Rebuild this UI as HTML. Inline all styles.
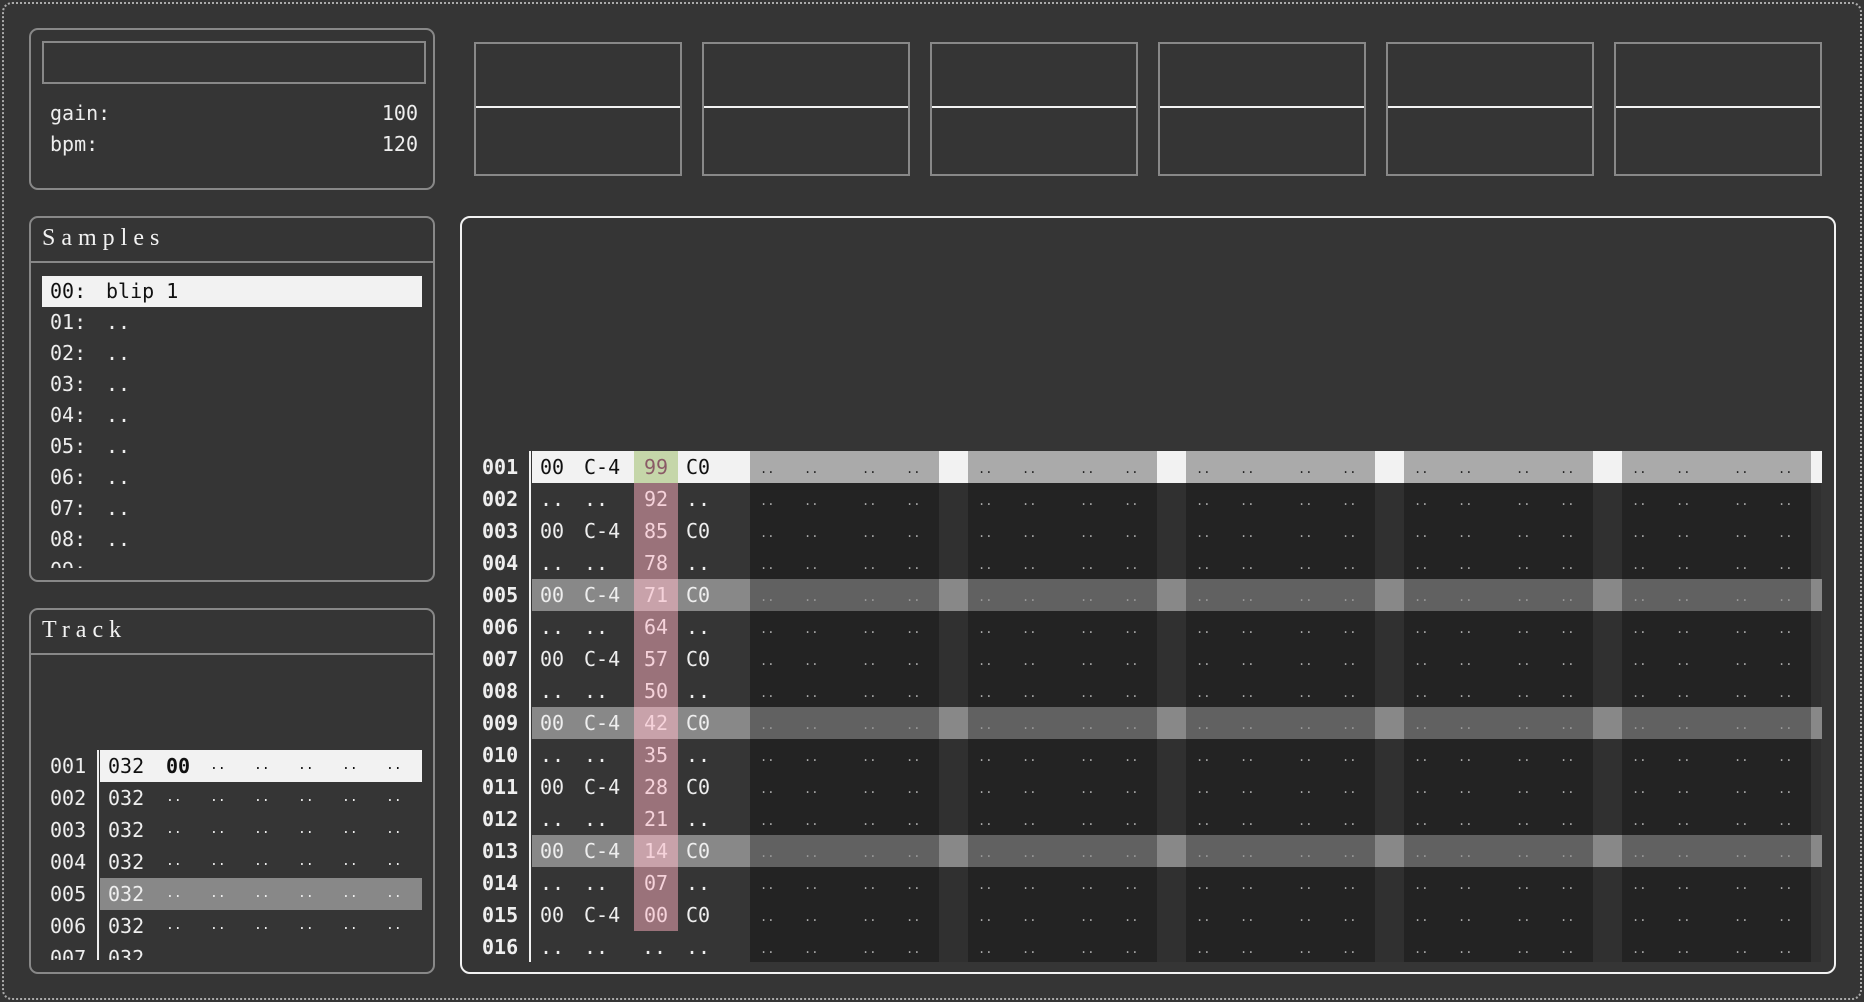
<!DOCTYPE html>
<html><head><meta charset="utf-8"><style>
*{margin:0;padding:0;box-sizing:border-box}
body{width:1864px;height:1002px;background:#353535;position:relative;overflow:hidden;font-family:"DejaVu Sans Mono","Liberation Mono",monospace;color:#eee;font-size:20px}
.a{position:absolute}
.outer{left:2px;top:2px;width:1860px;height:998px;border:2px dotted #aaa;border-radius:10px}
.panel{border:2px solid #888;border-radius:9px}
.hdr{font-family:"Liberation Serif",serif;font-size:24px;letter-spacing:6px;color:#f2f2f2}
.box{border:2px solid #888}
.box::after{content:"";position:absolute;left:0;right:0;top:62px;height:2px;background:#f2f2f2}
.sl{left:42px;width:380px;height:31px;line-height:31px}
.sl b{font-weight:normal;position:absolute;left:8px}
.sl u{text-decoration:none;position:absolute;left:64px}
.tr{left:42px;width:380px;height:32px;line-height:32px}
.tr span{position:absolute}
.pr{left:470px;width:1360px;height:32px;line-height:32px}
.pr span{position:absolute}
.pr .n{left:12px;font-weight:bold;color:#eee}
.pr .c{left:114px}
.pr .v{left:164px;width:44px;text-align:center;color:#f5d2da;background:#9a727a}
.sec{position:absolute;top:0;height:32px;width:189px;font-size:12px;color:#aaa}
.sec i{font-style:normal;position:absolute;top:2px}
.sec i:nth-child(1){left:10px}.sec i:nth-child(2){left:54px}.sec i:nth-child(3){left:112px}.sec i:nth-child(4){left:156px}
.s1{left:280px}.s2{left:498px}.s3{left:716px}.s4{left:934px}.s5{left:1152px}
.rb{position:absolute;left:62px;width:1290px;height:32px}
.sel .rb{background:#f2f2f2}.sel .sec{background:#aaa;color:#222}
.sel span{color:#111}.pr.sel .n{color:#eee}
.sel .v{background:#c5d6a9;color:#8a5a66}
.hl .rb{background:#888}.hl .sec{background:#616161;color:#999}
.hl .v{background:#c8a2aa}
</style></head><body>
<div class="a outer"></div>

<div class="a panel" style="left:29px;top:28px;width:406px;height:162px"></div>
<div class="a" style="left:42px;top:41px;width:384px;height:43px;border:2px solid #888"></div>
<div class="a" style="left:50px;top:100px;line-height:26px">gain:</div>
<div class="a" style="left:358px;top:100px;width:60px;text-align:right;line-height:26px">100</div>
<div class="a" style="left:50px;top:131px;line-height:26px">bpm:</div>
<div class="a" style="left:358px;top:131px;width:60px;text-align:right;line-height:26px">120</div>

<div class="a box" style="left:474px;top:42px;width:208px;height:134px"></div>
<div class="a box" style="left:702px;top:42px;width:208px;height:134px"></div>
<div class="a box" style="left:930px;top:42px;width:208px;height:134px"></div>
<div class="a box" style="left:1158px;top:42px;width:208px;height:134px"></div>
<div class="a box" style="left:1386px;top:42px;width:208px;height:134px"></div>
<div class="a box" style="left:1614px;top:42px;width:208px;height:134px"></div>

<div class="a panel" style="left:29px;top:216px;width:406px;height:366px"></div>
<div class="a" style="left:31px;top:261px;width:402px;height:2px;background:#888"></div>
<div class="a hdr" style="left:42px;top:225px">Samples</div>
<div class="a" style="left:0;top:276px;width:460px;height:292px;overflow:hidden">
<div class="a sl" style="top:0;background:#f2f2f2;color:#111"><b>00:</b><u>blip 1</u></div>
<div class="a sl" style="top:31px"><b>01:</b><u>..</u></div>
<div class="a sl" style="top:62px"><b>02:</b><u>..</u></div>
<div class="a sl" style="top:93px"><b>03:</b><u>..</u></div>
<div class="a sl" style="top:124px"><b>04:</b><u>..</u></div>
<div class="a sl" style="top:155px"><b>05:</b><u>..</u></div>
<div class="a sl" style="top:186px"><b>06:</b><u>..</u></div>
<div class="a sl" style="top:217px"><b>07:</b><u>..</u></div>
<div class="a sl" style="top:248px"><b>08:</b><u>..</u></div>
<div class="a sl" style="top:279px"><b>09:</b><u>..</u></div>
</div>

<div class="a panel" style="left:29px;top:608px;width:406px;height:366px"></div>
<div class="a" style="left:31px;top:653px;width:402px;height:2px;background:#888"></div>
<div class="a hdr" style="left:42px;top:617px">Track</div>
<div class="a" style="left:0;top:750px;width:460px;height:210px;overflow:hidden">
<div class="a" style="left:97px;top:0;width:2px;height:210px;background:#eee"></div>
<div class="a tr" style="top:0"><span style="left:8px;color:#eee">001</span><span style="left:58px;width:322px;height:32px;background:#f2f2f2"></span><span style="left:66px;color:#111">032</span><span style="left:124px;color:#111;font-weight:bold">00</span><span style="left:168px;color:#111;font-size:13px">..</span><span style="left:212px;color:#111;font-size:13px">..</span><span style="left:256px;color:#111;font-size:13px">..</span><span style="left:300px;color:#111;font-size:13px">..</span><span style="left:344px;color:#111;font-size:13px">..</span></div>
<div class="a tr" style="top:32px"><span style="left:8px">002</span><span style="left:66px">032</span><span style="left:124px;font-size:13px">..</span><span style="left:168px;font-size:13px">..</span><span style="left:212px;font-size:13px">..</span><span style="left:256px;font-size:13px">..</span><span style="left:300px;font-size:13px">..</span><span style="left:344px;font-size:13px">..</span></div>
<div class="a tr" style="top:64px"><span style="left:8px">003</span><span style="left:66px">032</span><span style="left:124px;font-size:13px">..</span><span style="left:168px;font-size:13px">..</span><span style="left:212px;font-size:13px">..</span><span style="left:256px;font-size:13px">..</span><span style="left:300px;font-size:13px">..</span><span style="left:344px;font-size:13px">..</span></div>
<div class="a tr" style="top:96px"><span style="left:8px">004</span><span style="left:66px">032</span><span style="left:124px;font-size:13px">..</span><span style="left:168px;font-size:13px">..</span><span style="left:212px;font-size:13px">..</span><span style="left:256px;font-size:13px">..</span><span style="left:300px;font-size:13px">..</span><span style="left:344px;font-size:13px">..</span></div>
<div class="a tr" style="top:128px"><span style="left:8px">005</span><span style="left:58px;width:322px;height:32px;background:#888"></span><span style="left:66px">032</span><span style="left:124px;font-size:13px">..</span><span style="left:168px;font-size:13px">..</span><span style="left:212px;font-size:13px">..</span><span style="left:256px;font-size:13px">..</span><span style="left:300px;font-size:13px">..</span><span style="left:344px;font-size:13px">..</span></div>
<div class="a tr" style="top:160px"><span style="left:8px">006</span><span style="left:66px">032</span><span style="left:124px;font-size:13px">..</span><span style="left:168px;font-size:13px">..</span><span style="left:212px;font-size:13px">..</span><span style="left:256px;font-size:13px">..</span><span style="left:300px;font-size:13px">..</span><span style="left:344px;font-size:13px">..</span></div>
<div class="a tr" style="top:192px"><span style="left:8px">007</span><span style="left:66px">032</span></div>
</div>

<div class="a" style="left:460px;top:216px;width:1376px;height:758px;border:2px solid #f2f2f2;border-radius:10px"></div>
<div class="a" style="left:529px;top:451px;width:2px;height:511px;background:#f2f2f2"></div>
<div class="a" style="left:750px;top:451px;width:189px;height:511px;background:#232323"></div>
<div class="a" style="left:939px;top:451px;width:29px;height:511px;background:#303030"></div>
<div class="a" style="left:968px;top:451px;width:189px;height:511px;background:#232323"></div>
<div class="a" style="left:1157px;top:451px;width:29px;height:511px;background:#303030"></div>
<div class="a" style="left:1186px;top:451px;width:189px;height:511px;background:#232323"></div>
<div class="a" style="left:1375px;top:451px;width:29px;height:511px;background:#303030"></div>
<div class="a" style="left:1404px;top:451px;width:189px;height:511px;background:#232323"></div>
<div class="a" style="left:1593px;top:451px;width:29px;height:511px;background:#303030"></div>
<div class="a" style="left:1622px;top:451px;width:189px;height:511px;background:#232323"></div>
<div class="a" style="left:1811px;top:451px;width:10px;height:511px;background:#303030"></div>

<div class="a pr sel" style="top:451px"><div class="rb"></div><span class="n">001</span><span style="left:70px">00</span><span class="c">C-4</span><span class="v">99</span><span style="left:216px">C0</span><div class="sec s1"><i>..</i><i>..</i><i>..</i><i>..</i></div><div class="sec s2"><i>..</i><i>..</i><i>..</i><i>..</i></div><div class="sec s3"><i>..</i><i>..</i><i>..</i><i>..</i></div><div class="sec s4"><i>..</i><i>..</i><i>..</i><i>..</i></div><div class="sec s5"><i>..</i><i>..</i><i>..</i><i>..</i></div></div>
<div class="a pr" style="top:483px"><span class="n">002</span><span style="left:70px">..</span><span class="c">..</span><span class="v">92</span><span style="left:216px">..</span><div class="sec s1"><i>..</i><i>..</i><i>..</i><i>..</i></div><div class="sec s2"><i>..</i><i>..</i><i>..</i><i>..</i></div><div class="sec s3"><i>..</i><i>..</i><i>..</i><i>..</i></div><div class="sec s4"><i>..</i><i>..</i><i>..</i><i>..</i></div><div class="sec s5"><i>..</i><i>..</i><i>..</i><i>..</i></div></div>
<div class="a pr" style="top:515px"><span class="n">003</span><span style="left:70px">00</span><span class="c">C-4</span><span class="v">85</span><span style="left:216px">C0</span><div class="sec s1"><i>..</i><i>..</i><i>..</i><i>..</i></div><div class="sec s2"><i>..</i><i>..</i><i>..</i><i>..</i></div><div class="sec s3"><i>..</i><i>..</i><i>..</i><i>..</i></div><div class="sec s4"><i>..</i><i>..</i><i>..</i><i>..</i></div><div class="sec s5"><i>..</i><i>..</i><i>..</i><i>..</i></div></div>
<div class="a pr" style="top:547px"><span class="n">004</span><span style="left:70px">..</span><span class="c">..</span><span class="v">78</span><span style="left:216px">..</span><div class="sec s1"><i>..</i><i>..</i><i>..</i><i>..</i></div><div class="sec s2"><i>..</i><i>..</i><i>..</i><i>..</i></div><div class="sec s3"><i>..</i><i>..</i><i>..</i><i>..</i></div><div class="sec s4"><i>..</i><i>..</i><i>..</i><i>..</i></div><div class="sec s5"><i>..</i><i>..</i><i>..</i><i>..</i></div></div>
<div class="a pr hl" style="top:579px"><div class="rb"></div><span class="n">005</span><span style="left:70px">00</span><span class="c">C-4</span><span class="v">71</span><span style="left:216px">C0</span><div class="sec s1"><i>..</i><i>..</i><i>..</i><i>..</i></div><div class="sec s2"><i>..</i><i>..</i><i>..</i><i>..</i></div><div class="sec s3"><i>..</i><i>..</i><i>..</i><i>..</i></div><div class="sec s4"><i>..</i><i>..</i><i>..</i><i>..</i></div><div class="sec s5"><i>..</i><i>..</i><i>..</i><i>..</i></div></div>
<div class="a pr" style="top:611px"><span class="n">006</span><span style="left:70px">..</span><span class="c">..</span><span class="v">64</span><span style="left:216px">..</span><div class="sec s1"><i>..</i><i>..</i><i>..</i><i>..</i></div><div class="sec s2"><i>..</i><i>..</i><i>..</i><i>..</i></div><div class="sec s3"><i>..</i><i>..</i><i>..</i><i>..</i></div><div class="sec s4"><i>..</i><i>..</i><i>..</i><i>..</i></div><div class="sec s5"><i>..</i><i>..</i><i>..</i><i>..</i></div></div>
<div class="a pr" style="top:643px"><span class="n">007</span><span style="left:70px">00</span><span class="c">C-4</span><span class="v">57</span><span style="left:216px">C0</span><div class="sec s1"><i>..</i><i>..</i><i>..</i><i>..</i></div><div class="sec s2"><i>..</i><i>..</i><i>..</i><i>..</i></div><div class="sec s3"><i>..</i><i>..</i><i>..</i><i>..</i></div><div class="sec s4"><i>..</i><i>..</i><i>..</i><i>..</i></div><div class="sec s5"><i>..</i><i>..</i><i>..</i><i>..</i></div></div>
<div class="a pr" style="top:675px"><span class="n">008</span><span style="left:70px">..</span><span class="c">..</span><span class="v">50</span><span style="left:216px">..</span><div class="sec s1"><i>..</i><i>..</i><i>..</i><i>..</i></div><div class="sec s2"><i>..</i><i>..</i><i>..</i><i>..</i></div><div class="sec s3"><i>..</i><i>..</i><i>..</i><i>..</i></div><div class="sec s4"><i>..</i><i>..</i><i>..</i><i>..</i></div><div class="sec s5"><i>..</i><i>..</i><i>..</i><i>..</i></div></div>
<div class="a pr hl" style="top:707px"><div class="rb"></div><span class="n">009</span><span style="left:70px">00</span><span class="c">C-4</span><span class="v">42</span><span style="left:216px">C0</span><div class="sec s1"><i>..</i><i>..</i><i>..</i><i>..</i></div><div class="sec s2"><i>..</i><i>..</i><i>..</i><i>..</i></div><div class="sec s3"><i>..</i><i>..</i><i>..</i><i>..</i></div><div class="sec s4"><i>..</i><i>..</i><i>..</i><i>..</i></div><div class="sec s5"><i>..</i><i>..</i><i>..</i><i>..</i></div></div>
<div class="a pr" style="top:739px"><span class="n">010</span><span style="left:70px">..</span><span class="c">..</span><span class="v">35</span><span style="left:216px">..</span><div class="sec s1"><i>..</i><i>..</i><i>..</i><i>..</i></div><div class="sec s2"><i>..</i><i>..</i><i>..</i><i>..</i></div><div class="sec s3"><i>..</i><i>..</i><i>..</i><i>..</i></div><div class="sec s4"><i>..</i><i>..</i><i>..</i><i>..</i></div><div class="sec s5"><i>..</i><i>..</i><i>..</i><i>..</i></div></div>
<div class="a pr" style="top:771px"><span class="n">011</span><span style="left:70px">00</span><span class="c">C-4</span><span class="v">28</span><span style="left:216px">C0</span><div class="sec s1"><i>..</i><i>..</i><i>..</i><i>..</i></div><div class="sec s2"><i>..</i><i>..</i><i>..</i><i>..</i></div><div class="sec s3"><i>..</i><i>..</i><i>..</i><i>..</i></div><div class="sec s4"><i>..</i><i>..</i><i>..</i><i>..</i></div><div class="sec s5"><i>..</i><i>..</i><i>..</i><i>..</i></div></div>
<div class="a pr" style="top:803px"><span class="n">012</span><span style="left:70px">..</span><span class="c">..</span><span class="v">21</span><span style="left:216px">..</span><div class="sec s1"><i>..</i><i>..</i><i>..</i><i>..</i></div><div class="sec s2"><i>..</i><i>..</i><i>..</i><i>..</i></div><div class="sec s3"><i>..</i><i>..</i><i>..</i><i>..</i></div><div class="sec s4"><i>..</i><i>..</i><i>..</i><i>..</i></div><div class="sec s5"><i>..</i><i>..</i><i>..</i><i>..</i></div></div>
<div class="a pr hl" style="top:835px"><div class="rb"></div><span class="n">013</span><span style="left:70px">00</span><span class="c">C-4</span><span class="v">14</span><span style="left:216px">C0</span><div class="sec s1"><i>..</i><i>..</i><i>..</i><i>..</i></div><div class="sec s2"><i>..</i><i>..</i><i>..</i><i>..</i></div><div class="sec s3"><i>..</i><i>..</i><i>..</i><i>..</i></div><div class="sec s4"><i>..</i><i>..</i><i>..</i><i>..</i></div><div class="sec s5"><i>..</i><i>..</i><i>..</i><i>..</i></div></div>
<div class="a pr" style="top:867px"><span class="n">014</span><span style="left:70px">..</span><span class="c">..</span><span class="v">07</span><span style="left:216px">..</span><div class="sec s1"><i>..</i><i>..</i><i>..</i><i>..</i></div><div class="sec s2"><i>..</i><i>..</i><i>..</i><i>..</i></div><div class="sec s3"><i>..</i><i>..</i><i>..</i><i>..</i></div><div class="sec s4"><i>..</i><i>..</i><i>..</i><i>..</i></div><div class="sec s5"><i>..</i><i>..</i><i>..</i><i>..</i></div></div>
<div class="a pr" style="top:899px"><span class="n">015</span><span style="left:70px">00</span><span class="c">C-4</span><span class="v">00</span><span style="left:216px">C0</span><div class="sec s1"><i>..</i><i>..</i><i>..</i><i>..</i></div><div class="sec s2"><i>..</i><i>..</i><i>..</i><i>..</i></div><div class="sec s3"><i>..</i><i>..</i><i>..</i><i>..</i></div><div class="sec s4"><i>..</i><i>..</i><i>..</i><i>..</i></div><div class="sec s5"><i>..</i><i>..</i><i>..</i><i>..</i></div></div>
<div class="a pr" style="top:931px;height:30px;overflow:hidden"><span class="n">016</span><span style="left:70px">..</span><span class="c">..</span><span style="left:172px">..</span><span style="left:216px">..</span><div class="sec s1"><i>..</i><i>..</i><i>..</i><i>..</i></div><div class="sec s2"><i>..</i><i>..</i><i>..</i><i>..</i></div><div class="sec s3"><i>..</i><i>..</i><i>..</i><i>..</i></div><div class="sec s4"><i>..</i><i>..</i><i>..</i><i>..</i></div><div class="sec s5"><i>..</i><i>..</i><i>..</i><i>..</i></div></div>
</body></html>
